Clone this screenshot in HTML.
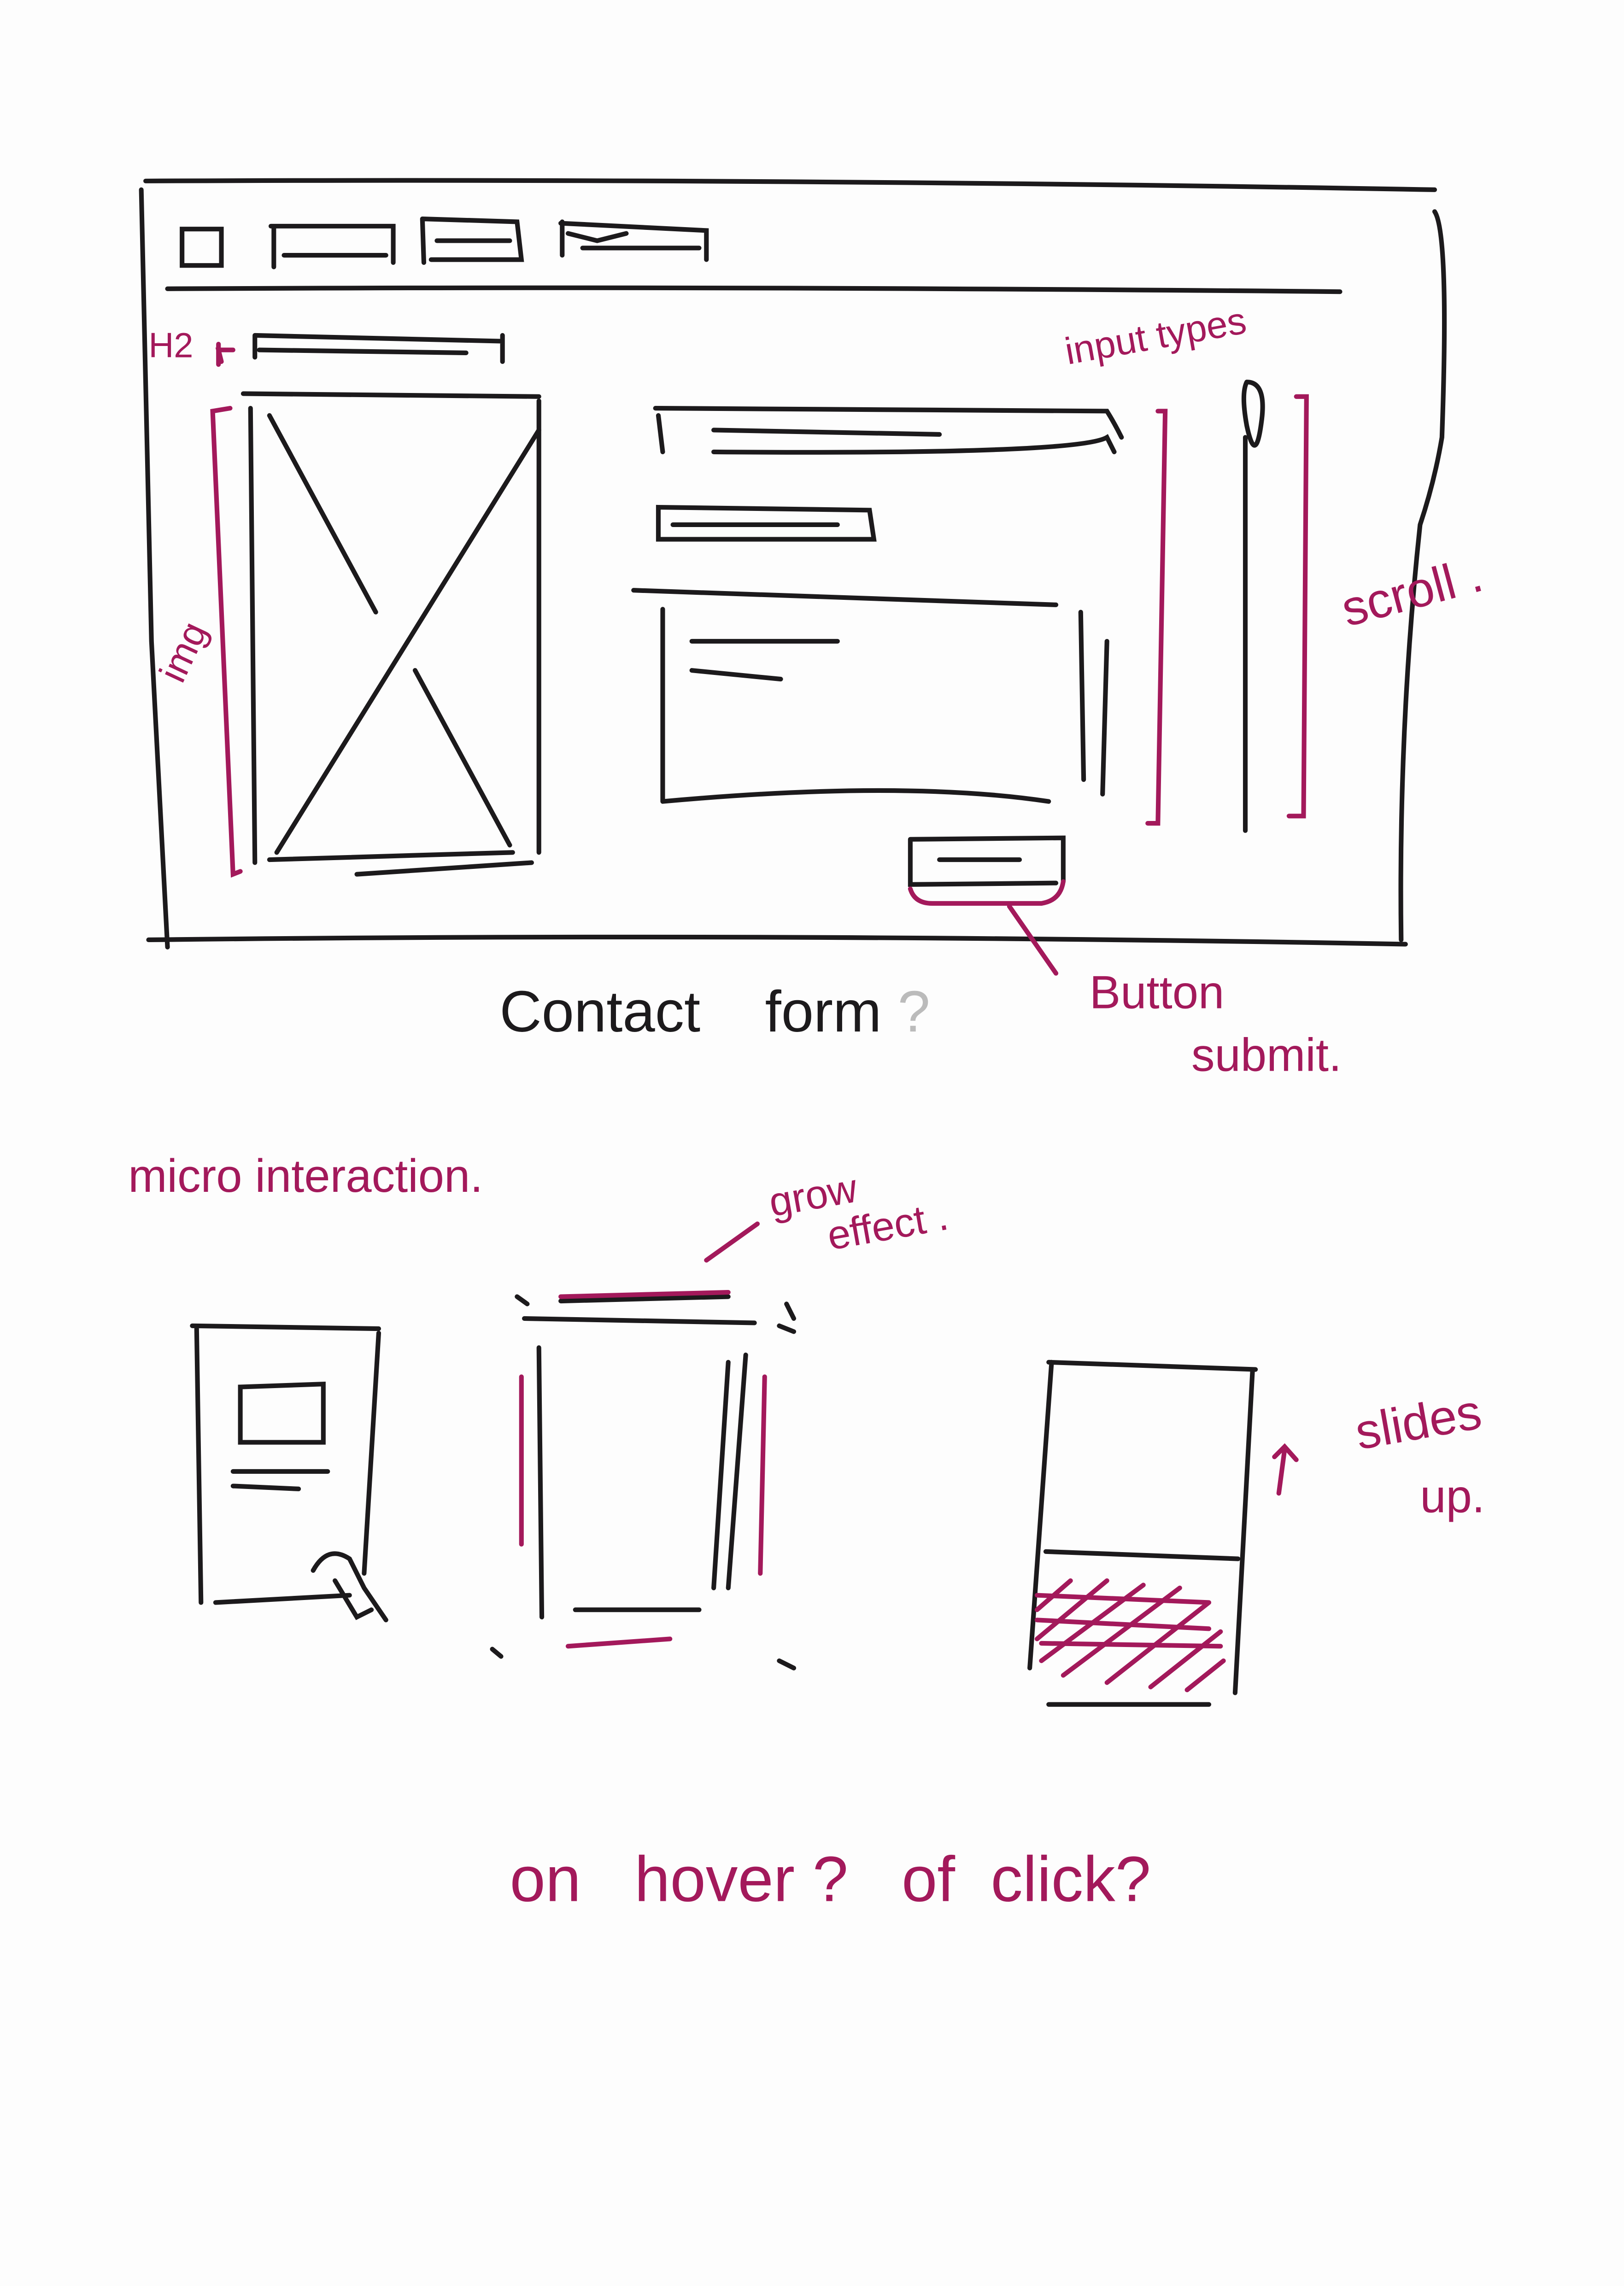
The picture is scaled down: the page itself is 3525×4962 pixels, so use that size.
<!DOCTYPE html>
<html><head><meta charset="utf-8"><style>
html,body{margin:0;padding:0;background:#fdfdfd}
svg{display:block}
text{font-family:"Liberation Sans",sans-serif}
</style></head><body>
<svg width="3525" height="4962" viewBox="0 0 1115 1569" xmlns="http://www.w3.org/2000/svg">
<rect width="1115" height="1569" fill="#fdfdfd"/>
<g fill="none" stroke="#1c1a1c" stroke-width="3.2" stroke-linecap="round">
<path d="M100 124 Q540 122 985 130"/>
<path d="M97 130 L104 440 L115 650"/>
<path d="M102 645 Q530 640 965 648"/>
<path d="M985 145 Q995 160 990 300 Q985 330 975 360 Q960 500 962 645"/>
<path d="M125 157 L152 157 L152 182 L125 182 Z"/>
<path d="M186 155 L270 155 L270 180 M188 155 L188 183 M195 175 L265 175"/>
<path d="M290 150 L355 152 L358 178 L296 178 M290 150 L291 180 M300 165 L350 165"/>
<path d="M385 153 L485 158 L485 178 M386 152 L386 175 M400 170 L480 170 M390 160 L410 165 L430 160"/>
<path d="M115 198 Q500 196 920 200"/>
<path d="M175 230 L345 234 M345 230 L345 248 M178 240 L320 242 M175 230 L175 245"/>
<path d="M167 270 L370 272 M172 280 L175 592 M370 275 L370 585 M185 590 L352 585 M245 600 L365 592"/>
<path d="M185 285 L258 420 M370 295 L190 585 M285 460 L350 580"/>
<path d="M450 280 L760 282 Q765 290 770 300 M452 285 L455 310 M490 295 L645 298 M490 310 Q740 312 760 300 L765 310"/>
<path d="M452 348 L597 350 L600 370 L452 370 Z M462 360 L575 360"/>
<path d="M435 405 L725 415 M455 418 L455 550 M455 550 Q620 535 720 550 M475 440 L575 440 M475 460 L536 466 M742 420 L744 535 M760 440 L757 545"/>
<path d="M856 262 Q870 262 866 290 Q862 320 856 292 Q852 270 856 262 M855 300 L855 570"/>
<path d="M625 576 L730 575 L730 605 M625 576 L625 607 L725 606 M645 590 L700 590"/>
<path d="M132 910 L260 912 M135 912 L138 1100 M260 915 L250 1080 M148 1100 L240 1095"/>
<path d="M165 952 L222 950 L222 990 L165 990 Z M160 1010 L225 1010 M160 1020 L205 1022"/>
<path d="M215 1078 Q225 1060 240 1070 L250 1090 L265 1112 M230 1085 L245 1110 L255 1105"/>
<path d="M360 905 L518 908 M385 893 L500 890 M370 925 L372 1110 M500 935 L490 1090 M512 930 L500 1090 M395 1105 L480 1105"/>
<path d="M355 890 L362 895 M540 895 L545 905 M535 910 L545 914 M338 1132 L344 1137 M535 1140 L545 1145"/>
<path d="M720 935 L862 940 M722 935 L707 1145 M860 940 L848 1162 M718 1065 L850 1070 M720 1170 L830 1170"/>
</g>
<g fill="none" stroke="#a3195b" stroke-width="3.2" stroke-linecap="round">
<path d="M160 240 L150 240 L152 248 M150 236 L150 250"/>
<path d="M158 280 L146 282 L160 600 L165 598"/>
<path d="M795 282 L800 282 L795 565 L788 565"/>
<path d="M890 272 L897 272 L895 560 L885 560"/>
<path d="M625 610 Q628 620 640 620 L715 620 Q728 618 730 605 M693 622 L725 668"/>
<path d="M485 865 L520 840"/>
<path d="M385 890 L500 887 M358 945 L358 1060 M525 945 L522 1080 M390 1130 L460 1125"/>
<path d="M878 1025 L882 995 M875 1000 L882 993 L890 1002"/>
<path d="M712 1105 L735 1085 M712 1125 L760 1085 M715 1140 L785 1088 M730 1150 L810 1090 M760 1155 L830 1100 M790 1158 L838 1120 M815 1160 L840 1140 M712 1095 L830 1100 M712 1112 L830 1118 M715 1128 L838 1130"/>
</g>
<g fill="#a3195b" font-size="28">
<text x="102" y="245" font-size="24">H2</text>
<text x="733" y="250" font-size="26" transform="rotate(-10 733 250)">input types</text>
<text x="925" y="430" font-size="34" transform="rotate(-15 925 430)">scroll .</text>
<text x="125" y="470" font-size="26" transform="rotate(-65 125 470)">img</text>
<text x="748" y="692" font-size="32">Button</text>
<text x="818" y="735" font-size="32">submit.</text>
<text x="88" y="818" font-size="32">micro interaction.</text>
<text x="530" y="835" font-size="28" transform="rotate(-10 530 835)">grow</text>
<text x="570" y="858" font-size="28" transform="rotate(-10 570 858)">effect .</text>
<text x="933" y="995" font-size="34" transform="rotate(-10 933 995)">slides</text>
<text x="975" y="1038" font-size="32">up.</text>
<text x="350" y="1305" font-size="44">on&#160;&#160;&#160;hover ?&#160;&#160;&#160;of&#160;&#160;click?</text>
</g>
<text x="343" y="708" font-size="40" fill="#1c1a1c">Contact&#160;&#160;&#160;&#160;form <tspan fill="#bbb">?</tspan></text>
</svg>
</body></html>
